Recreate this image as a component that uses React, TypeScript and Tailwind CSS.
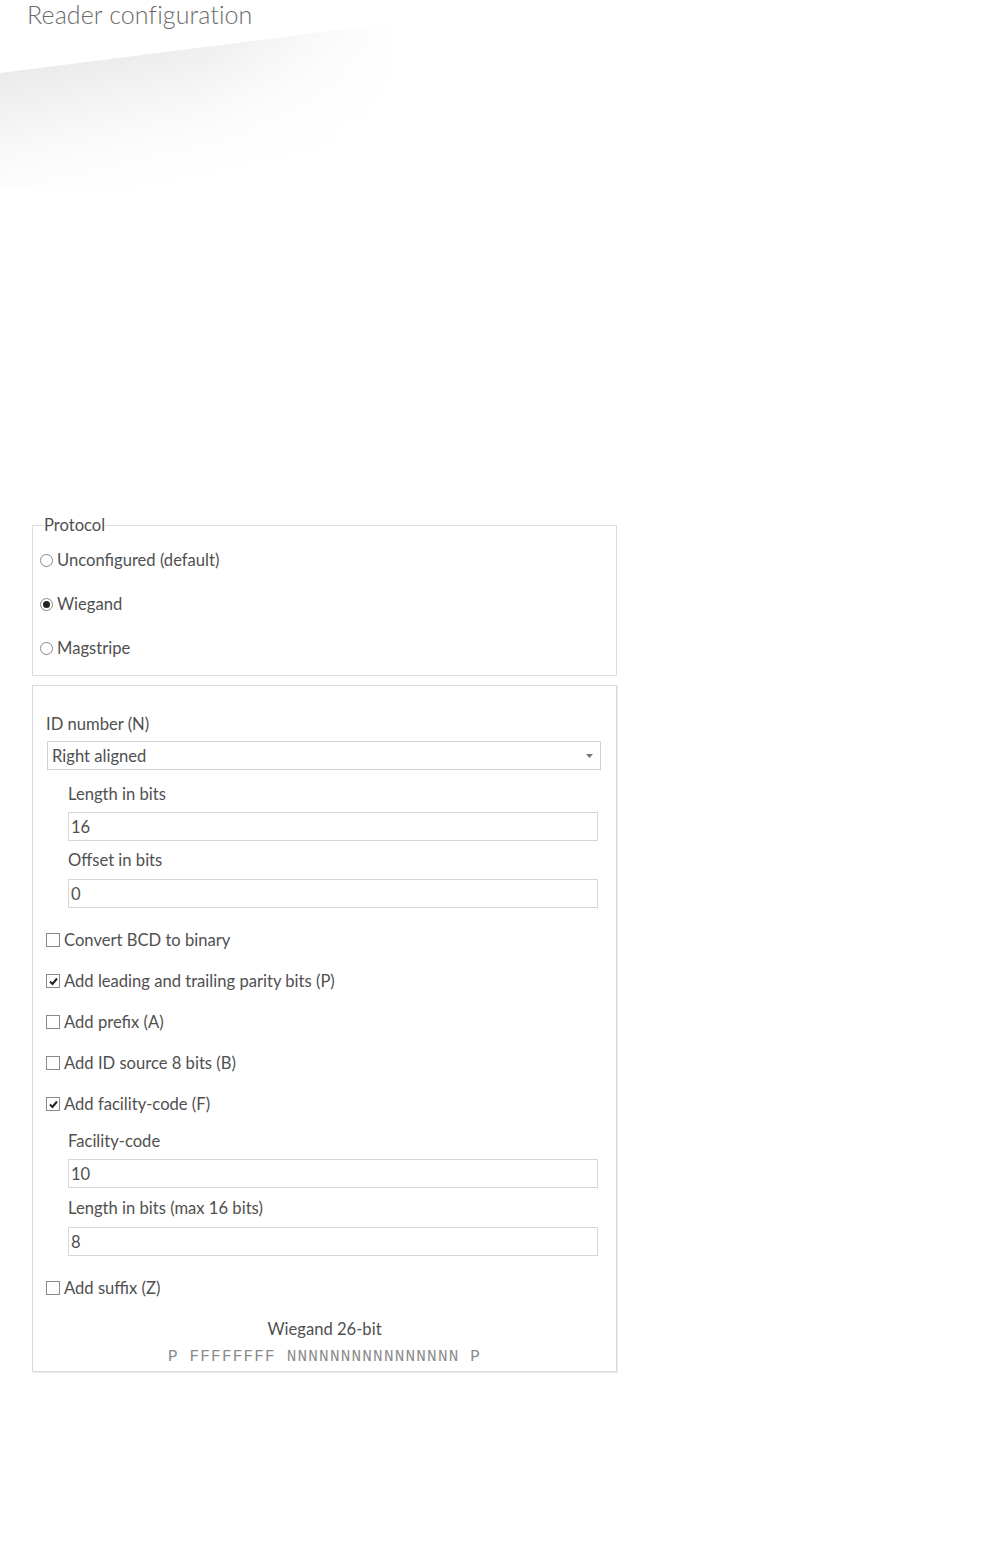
import React from "react";

const font = { fontFamily: "Lato, 'Liberation Sans', sans-serif" };

function Radio({ checked, label }: { checked?: boolean; label: string }) {
  return (
    <div className="flex h-5 items-center">
      <span className="flex h-[13px] w-[13px] items-center justify-center rounded-full border border-[#8a8a8a] bg-white">
        {checked && <span className="h-[7px] w-[7px] rounded-full bg-[#222]" />}
      </span>
      <span className="ml-[4px]">{label}</span>
    </div>
  );
}

function Check({ checked, label, className = "" }: { checked?: boolean; label: string; className?: string }) {
  return (
    <div className={`flex h-5 items-center ${className}`}>
      <span className="flex h-[14px] w-[14px] items-center justify-center border border-[#8a8a8a] bg-white">
        {checked && (
          <svg viewBox="0 0 11 11" className="h-[11px] w-[11px]">
            <path d="M2 5.5 L4.5 8 L9 2.5" fill="none" stroke="#222" strokeWidth="2" />
          </svg>
        )}
      </span>
      <span className="ml-[4px]">{label}</span>
    </div>
  );
}

function Field({ value, className = "" }: { value: string; className?: string }) {
  return (
    <div className={`flex h-[29px] w-[530px] items-center border border-[#d6d6d6] bg-white pl-[2px] ${className}`}>
      {value}
    </div>
  );
}

export default function App() {
  return (
    <div className="relative h-[1544px] w-[1004px] overflow-hidden bg-white text-[16.6px] text-[#505050]" style={font}>
      {/* header wedge (decoration behind title) */}
      <svg width="400" height="190" viewBox="0 0 400 190" className="pointer-events-none absolute left-0 top-0">
        <defs>
          <linearGradient id="wedge" x1="0" y1="0" x2="0.55" y2="1">
            <stop offset="0" stopColor="#e2e2e2" />
            <stop offset="0.45" stopColor="#f3f3f3" />
            <stop offset="1" stopColor="#ffffff" stopOpacity="0" />
          </linearGradient>
          <linearGradient id="fadeRight" x1="0" y1="0" x2="1" y2="0">
            <stop offset="0" stopColor="#fff" stopOpacity="0" />
            <stop offset="1" stopColor="#fff" stopOpacity="1" />
          </linearGradient>
        </defs>
        <polygon points="0,73 385,24 400,24 400,190 0,190" fill="url(#wedge)" />
        <polygon points="200,47 385,24 400,24 400,190 200,190" fill="url(#fadeRight)" />
      </svg>
      <h1 className="relative pl-[27px] pt-[1px] text-[25px] font-light leading-[26px] tracking-[0.1px] text-[#6b6b6b]">
        Reader configuration
      </h1>

      <div className="pl-[32px] pt-[488px]">
        {/* protocol */}
        <fieldset className="w-[585px] border border-[#dedede] pb-[17px] pl-[7px]">
          <legend className="ml-[4px] leading-[20px]">Protocol</legend>
          <div className="mt-[15px] flex flex-col gap-[24px]">
            <Radio label="Unconfigured (default)" />
            <Radio checked label="Wiegand" />
            <Radio label="Magstripe" />
          </div>
        </fieldset>

        {/* wiegand settings */}
        <div className="mt-[9px] w-[585px] border border-[#d9d9d9] pb-[4px] pl-[13px] leading-[20px] shadow-[1px_1px_0_#ececec]">
          <div className="mt-[28px]">ID number (N)</div>
          <div className="relative mt-[7px] ml-[1px] flex h-[29px] w-[554px] items-center border border-[#d2d2d2] pl-[4px]">
            Right aligned
            <svg width="7" height="4" viewBox="0 0 7 4" className="absolute right-[7px] top-[12px]">
              <polygon points="0,0 7,0 3.5,4" fill="#777" />
            </svg>
          </div>
          <div className="pl-[22px]">
            <div className="mt-[14px]">Length in bits</div>
            <Field className="mt-[8px]" value="16" />
            <div className="mt-[9px]">Offset in bits</div>
            <Field className="mt-[9px]" value="0" />
          </div>

          <div className="mt-[22px] flex flex-col gap-[21px]">
            <Check label="Convert BCD to binary" />
            <Check checked label="Add leading and trailing parity bits (P)" />
            <Check label="Add prefix (A)" />
            <Check label="Add ID source 8 bits (B)" />
            <Check checked label="Add facility-code (F)" />
          </div>

          <div className="pl-[22px]">
            <div className="mt-[17px]">Facility-code</div>
            <Field className="mt-[8px]" value="10" />
            <div className="mt-[10px]">Length in bits (max 16 bits)</div>
            <Field className="mt-[9px]" value="8" />
          </div>

          <Check className="mt-[22px]" label="Add suffix (Z)" />

          <div className="-ml-[13px] mt-[21px] text-center">Wiegand 26-bit</div>
          <div
            className="-ml-[13px] mt-[8px] whitespace-pre text-center text-[16px] tracking-[1.2px] text-[#8a8a8a]"
            style={{ fontFamily: "'Liberation Mono', 'Courier New', monospace" }}
          >
            P FFFFFFFF NNNNNNNNNNNNNNNN P
          </div>
        </div>
      </div>
    </div>
  );
}
